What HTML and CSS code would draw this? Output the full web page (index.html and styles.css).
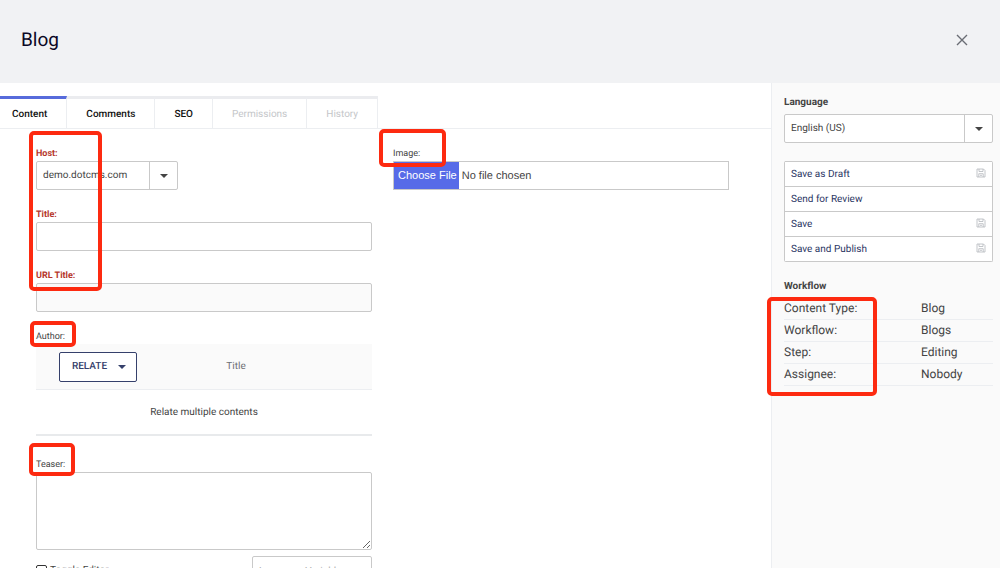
FILE: index.html
```html
<!DOCTYPE html>
<html lang="en">
<head>
<meta charset="utf-8">
<title>Blog</title>
<link rel="stylesheet" href="styles.css">
</head>
<body>
<svg class="sprite" aria-hidden="true">
  <symbol id="disk" viewBox="0 0 10 10"><path d="M1 1h6.500L9 2.500V9H1z M3 1v2.500h4V1 M2.800 9V5.700h4.400V9 M4 7.300h2" fill="none" stroke="currentColor" stroke-width=".8"/></symbol>
  <symbol id="caret" viewBox="0 0 8 4"><path d="M0 0h8L4 4z" fill="currentColor"/></symbol>
</svg>
<header class="header">
  <h1 class="header-title">Blog</h1>
  <button class="close" type="button" aria-label="Close"><svg viewBox="0 0 12 12"><path d="M1 1l10 10M11 1L1 11" stroke="currentColor" stroke-width="1.400"/></svg></button>
</header>
<div class="layout">
  <main class="main">
    <nav class="tabs">
      <button class="tab active" type="button">Content</button>
      <button class="tab" type="button">Comments</button>
      <button class="tab" type="button">SEO</button>
      <button class="tab" type="button" disabled>Permissions</button>
      <button class="tab" type="button" disabled>History</button>
    </nav>
    <form class="columns">
      <div class="column">
        <div class="marked">
          <div class="field">
            <label class="label required" for="host">Host:</label>
            <div class="combo combo-host">
              <select id="host" class="control select"><option>demo.dotcms.com</option></select>
              <span class="combo-arrow"><svg class="caret"><use href="#caret"/></svg></span>
            </div>
          </div>
          <div class="field">
            <label class="label required" for="title">Title:</label>
            <input id="title" class="control" type="text">
          </div>
          <div class="field">
            <label class="label required" for="url">URL Title:</label>
            <input id="url" class="control readonly" type="text" readonly>
          </div>
          <span class="mark mark-required"></span>
        </div>
        <div class="field marked">
          <div class="label">Author:</div>
          <table class="relations">
            <thead>
              <tr>
                <th class="relate-cell"><button class="relate" type="button">RELATE <svg class="caret"><use href="#caret"/></svg></button></th>
                <th class="relate-title">Title</th>
              </tr>
            </thead>
            <tbody><tr><td colspan="2">Relate multiple contents</td></tr></tbody>
          </table>
          <span class="mark mark-author"></span>
        </div>
        <div class="field marked teaser">
          <label class="label" for="teaser">Teaser:</label>
          <textarea id="teaser" class="control textarea"></textarea>
          <span class="mark mark-teaser"></span>
        </div>
        <div class="editor-row">
          <label class="toggle"><input class="check" type="checkbox">Toggle Editor</label>
          <input class="control variable" type="text" placeholder="Language Variable" aria-label="Language Variable">
        </div>
      </div>
      <div class="column">
        <div class="field marked">
          <label class="label" for="image">Image:</label>
          <input id="image" class="control file" type="file">
          <span class="mark mark-image"></span>
        </div>
      </div>
    </form>
  </main>
  <aside class="sidebar">
    <label class="side-label" for="language">Language</label>
    <div class="combo">
      <select id="language" class="control select"><option>English (US)</option></select>
      <span class="combo-arrow"><svg class="caret"><use href="#caret"/></svg></span>
    </div>
    <div class="actions">
      <button class="action" type="button">Save as Draft<svg class="disk"><use href="#disk"/></svg></button>
      <button class="action" type="button">Send for Review</button>
      <button class="action" type="button">Save<svg class="disk"><use href="#disk"/></svg></button>
      <button class="action" type="button">Save and Publish<svg class="disk"><use href="#disk"/></svg></button>
    </div>
    <h2 class="side-label">Workflow</h2>
    <div class="marked">
      <table class="workflow">
        <tr><th>Content Type:</th><td>Blog</td></tr>
        <tr><th>Workflow:</th><td>Blogs</td></tr>
        <tr><th>Step:</th><td>Editing</td></tr>
        <tr><th>Assignee:</th><td>Nobody</td></tr>
      </table>
      <span class="mark mark-workflow"></span>
    </div>
  </aside>
</div>
</body>
</html>
```
FILE: styles.css
```css
* { box-sizing: border-box; }

body {
  margin: 0;
  height: 100vh;
  overflow: hidden;
  display: flex;
  flex-direction: column;
  background: #fff;
  color: #444;
  font: 10px/16px Roboto, sans-serif;
  text-rendering: geometricPrecision;
}

button, input, select, textarea { font: inherit; color: inherit; text-rendering: inherit; }
button { cursor: pointer; }

.sprite { display: none; }
.caret { width: 8px; height: 4px; }

.header {
  display: flex;
  flex: none;
  align-items: center;
  justify-content: space-between;
  padding: 28px 32px 31px 21px;
  background: #f1f2f4;
}
.header-title { margin: 0; font-size: 19px; line-height: 24px; font-weight: 400; color: #0a0725; }
.close { display: flex; padding: 0; border: 0; background: none; color: #6a6d74; }
.close svg { width: 12px; height: 12px; }

.layout { display: flex; flex: 1; min-height: 0; }
.main { flex: 1; min-width: 0; padding-top: 13px; overflow: hidden; }

.tabs { display: flex; border-bottom: 1px solid #eceef1; }
.tab {
  padding: 8px 19px 5px;
  border: 0;
  border-top: 3px solid #ebecef;
  border-right: 1px solid #eceef1;
  background: #fff;
  color: #111;
  font-weight: 500;
}
.tab.active { padding-left: 12px; border-top-color: #576bdb; }
.tab:disabled { color: #c4c6c9; font-weight: 400; }

.columns {
  display: grid;
  grid-template-columns: 1fr 1fr;
  gap: 21px;
  padding: 16px 42px 0 36px;
}
.column { min-width: 0; }
.marked { position: relative; }
.field { margin-bottom: 16px; }
.label { display: block; height: 16px; font-size: 9px; line-height: 18px; }
.required { color: #b5352a; font-weight: 700; }

.control {
  display: block;
  width: 100%;
  height: 29px;
  padding: 1px 6px 0;
  border: 1px solid #c9c9c9;
  border-radius: 2px;
  background: #fff;
  outline: 0;
}
.readonly { background: #fafafa; }
.select { appearance: none; }
.combo { position: relative; }
.combo-host { width: 142px; }
.combo-arrow {
  position: absolute;
  inset: 0 0 0 auto;
  width: 29px;
  display: flex;
  align-items: center;
  justify-content: center;
  border-left: 1px solid #c9c9c9;
  pointer-events: none;
}

.relations { width: 100%; border-collapse: collapse; table-layout: fixed; }
.relations th { height: 45px; padding: 2px 0 0; background: #fafafa; border-bottom: 1px solid #eceef1; font-weight: 400; text-align: center; }
.relations td { height: 46px; padding: 2px 0 0; border-bottom: 2px solid #e8eaec; text-align: center; }
.relations .relate-cell { width: 124px; }
.relations .relate-title { padding-right: 60px; color: #6c6f75; }
.relate {
  display: inline-flex;
  align-items: center;
  gap: 11px;
  padding: 6px 10px 6px 12px;
  border: 1px solid #35406b;
  border-radius: 2px;
  background: #fff;
  color: #35406b;
  font-weight: 500;
}

.teaser { margin: 20px 0 6px; }
.textarea { height: 78px; resize: vertical; }
.editor-row { display: flex; justify-content: space-between; }
.toggle { display: flex; align-items: center; gap: 3px; height: 29px; }
.check { width: 11px; height: 11px; margin: 0; appearance: none; border: 1px solid #333; border-radius: 2px; }
.variable { width: 120px; }
.variable::placeholder { color: #aaa; }

.file { padding: 0; border-radius: 0; line-height: 27px; font-size: 11px; font-family: "Liberation Sans", sans-serif; }
.file::file-selector-button {
  height: 27px;
  margin: 0 3px 0 0;
  padding: 0 2px 0 4px;
  border: 0;
  background: #576be8;
  color: #fff;
  font: inherit;
}

.sidebar {
  flex: none;
  width: 229px;
  padding: 11px 7px 0 12px;
  border-left: 1px solid #eceef1;
  background: #fafafa;
}
.side-label { display: block; height: 16px; margin: 0; font-size: 10px; line-height: 18px; font-weight: 700; }
.sidebar .combo { margin: 4px 0 18px; }
.actions { margin-bottom: 16px; border: 1px solid #c9c9c9; border-top: 0; border-radius: 2px; }
.action {
  display: flex;
  align-items: flex-start;
  justify-content: space-between;
  width: 100%;
  height: 25px;
  padding: 5px 6px 0;
  border: 0;
  border-top: 1px solid #c9c9c9;
  background: #fff;
  color: #2a3563;
  text-align: left;
}
.disk { width: 10px; height: 10px; margin-top: 1px; color: #b4b7bd; }

.workflow { width: 100%; margin-top: 3px; border-collapse: collapse; font-size: 12px; }
.workflow th, .workflow td { height: 22px; padding: 0; border-bottom: 1px solid #eceef1; text-align: left; font-weight: 400; }
.workflow th { width: 137px; }

/* Highlight frames drawn over the form */
.mark { position: absolute; border: 4px solid #fd2a10; border-radius: 5px; pointer-events: none; }
.mark-required { top: -14px; left: -7px; width: 73px; height: 160px; }
.mark-author { top: -7px; left: -6px; width: 46px; height: 26px; }
.mark-teaser { top: -13px; left: -7px; width: 46px; height: 33px; }
.mark-image { top: -16px; left: -14px; width: 67px; height: 38px; }
.mark-workflow { top: 0; left: -17px; width: 110px; height: 99px; }
```
